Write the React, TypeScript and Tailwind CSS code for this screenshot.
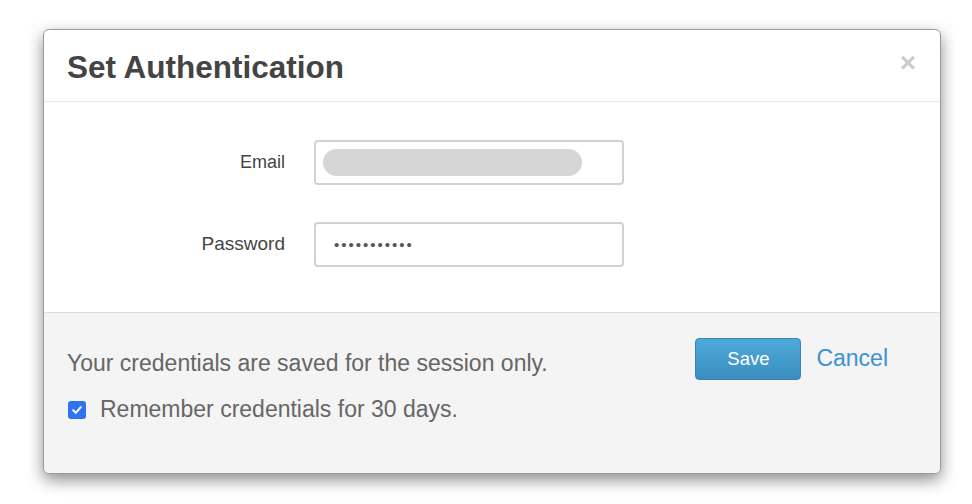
import React from "react";

const font = { fontFamily: '"Liberation Sans", Arial, sans-serif' };

export default function App() {
  return (
    <div className="w-[972px] h-[504px] bg-white pt-[29px] pl-[43px]" style={font}>
      <div className="w-[898px] h-[445px] flex flex-col rounded-[6px] border border-[#9b9b9b] bg-white shadow-[0_6px_16px_rgba(0,0,0,0.45)] overflow-hidden">
        {/* header */}
        <div className="h-[72px] shrink-0 flex items-center justify-between pl-[23px] pr-[24px] border-b border-[#e8e8e8]">
          <h2 className="text-[31.5px] font-bold text-[#444] leading-none pt-[4px]">Set Authentication</h2>
          <span className="text-[28px] font-bold text-[#cccccc] leading-none -mt-[6px]">×</span>
        </div>

        {/* body */}
        <div className="h-[211px] shrink-0 border-b border-[#dcdcdc] pt-[38px] flex flex-col gap-[37px]">
          <div className="flex items-center">
            <label className="w-[241px] text-right text-[18px] text-[#444]">Email</label>
            <div className="ml-[29px] w-[310px] h-[45px] rounded-[4px] border-2 border-[#d2d2d2] bg-white flex items-center pl-[7px]">
              <div className="w-[259px] h-[27px] rounded-full bg-[#d6d6d6]" />
            </div>
          </div>
          <div className="flex items-center">
            <label className="w-[241px] text-right text-[19px] text-[#444]">Password</label>
            <div className="ml-[29px] w-[310px] h-[45px] rounded-[4px] border-2 border-[#d2d2d2] bg-white flex items-center pl-[18px]">
              <span className="text-[15px] text-[#555] tracking-[2px] leading-none">•••••••••••</span>
            </div>
          </div>
        </div>

        {/* footer */}
        <div className="flex-1 bg-[#f4f4f4] flex justify-between pl-[23px] pr-[52px] pt-[24px]">
          <div className="pt-[15px] text-[23px] text-[#666] leading-none">
            <p>Your credentials are saved for the session only.</p>
            <div className="mt-[23px] flex items-center">
              <span className="ml-[1px] w-[18px] h-[18px] rounded-[3px] bg-[#2f73f0] flex items-center justify-center">
                <svg width="12" height="12" viewBox="0 0 12 12" fill="none">
                  <path d="M2.2 6.3 L4.8 8.9 L9.8 3.2" stroke="white" strokeWidth="2" strokeLinecap="round" strokeLinejoin="round" />
                </svg>
              </span>
              <span className="ml-[14px]">Remember credentials for 30 days.</span>
            </div>
          </div>
          <div className="flex items-start pt-[1px]">
            <button className="w-[106px] h-[42px] rounded-[4px] border border-[#3784b2] bg-gradient-to-b from-[#4eaad9] to-[#3a8ec1] text-white text-[18.5px]">
              Save
            </button>
            <span className="ml-[15px] mt-[9px] text-[23px] text-[#3b93d3] leading-none">Cancel</span>
          </div>
        </div>
      </div>
    </div>
  );
}
